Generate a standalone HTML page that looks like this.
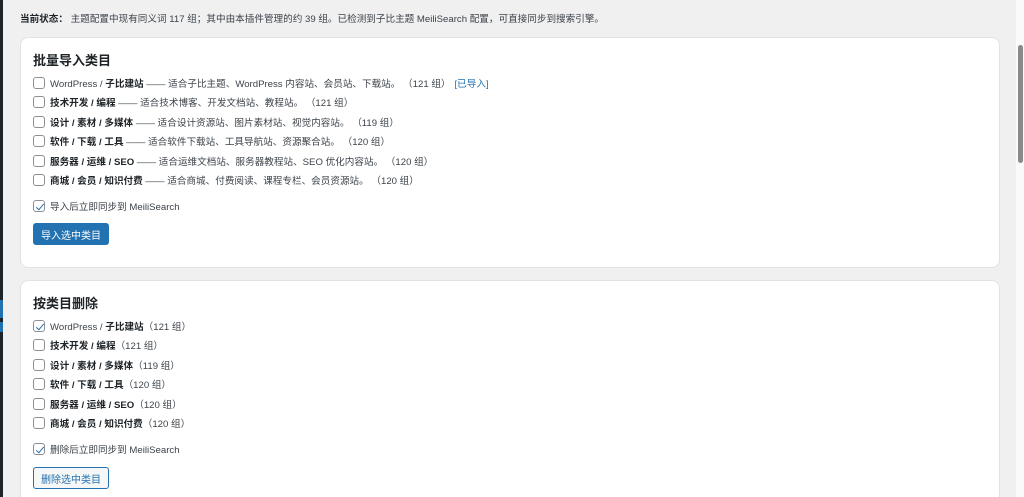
<!DOCTYPE html>
<html><head><meta charset="utf-8"><style>
*{box-sizing:border-box;margin:0;padding:0}
html,body{width:1024px;height:497px;overflow:hidden}
body{background:#f0f0f1;font-family:"Liberation Sans","Noto Sans CJK SC",sans-serif;color:#3c434a;font-size:9.6px;position:relative}
.lb{position:absolute;left:0;top:0;width:3px;height:497px;background:#1d2327}
.lb i{position:absolute;left:0;width:3px;height:18px;background:#2271b1}
.sb{position:absolute;right:0;top:0;width:8px;height:497px;background:#fafafa}
.sb i{position:absolute;left:2px;top:45px;width:5px;height:118px;border-radius:3px;background:#8a8a8a}
.status{position:absolute;left:20px;top:11px;font-size:9.6px;color:#3c434a}
.status b{color:#1d2327}
.card{position:absolute;left:20px;width:980px;background:#fff;border:1px solid #e2e2e4;border-radius:8px}
h2{position:absolute;left:12px;font-size:13px;font-weight:bold;color:#1d2327}
.row{position:absolute;left:12px;height:14px;display:flex;align-items:center;white-space:nowrap}
.cb{width:12px;height:12px;border:1px solid #8c8f94;border-radius:3px;margin-right:5px;position:relative;background:#fff;flex:none}
.cb.on::after{content:"";position:absolute;left:3.5px;top:0.5px;width:3px;height:7px;border:solid #2271b1;border-width:0 1.6px 1.6px 0;transform:rotate(40deg)}
.row b{color:#1d2327}
.a{color:#2271b1;margin-left:4px}
.btn{position:absolute;left:12px;height:22px;padding:0 7px;border-radius:3px;font-size:10px;display:flex;align-items:center}
.p{background:#2271b1;color:#fff;border:1px solid #2271b1}
.s{background:#f6f7f7;color:#2271b1;border:1px solid #2271b1}
</style></head><body>
<div class="lb"><i style="top:300px"></i><i style="top:322px;height:10px"></i></div>
<div class="sb"><i></i></div>
<div class="status"><b>当前状态：</b> 主题配置中现有同义词 117 组；其中由本插件管理的约 39 组。已检测到子比主题 MeiliSearch 配置，可直接同步到搜索引擎。</div>

<div class="card" style="top:37px;height:231px">
<h2 style="top:12px">批量导入类目</h2>
<div class="row" style="top:38px"><span class="cb"></span><span>WordPress / <b>子比建站</b> —— 适合子比主题、WordPress 内容站、会员站、下载站。 （121 组）</span><span class="a">[已导入]</span></div>
<div class="row" style="top:57px"><span class="cb"></span><span><b>技术开发 / 编程</b> —— 适合技术博客、开发文档站、教程站。 （121 组）</span></div>
<div class="row" style="top:77px"><span class="cb"></span><span><b>设计 / 素材 / 多媒体</b> —— 适合设计资源站、图片素材站、视觉内容站。 （119 组）</span></div>
<div class="row" style="top:96px"><span class="cb"></span><span><b>软件 / 下载 / 工具</b> —— 适合软件下载站、工具导航站、资源聚合站。 （120 组）</span></div>
<div class="row" style="top:116px"><span class="cb"></span><span><b>服务器 / 运维 / SEO</b> —— 适合运维文档站、服务器教程站、SEO 优化内容站。 （120 组）</span></div>
<div class="row" style="top:135px"><span class="cb"></span><span><b>商城 / 会员 / 知识付费</b> —— 适合商城、付费阅读、课程专栏、会员资源站。 （120 组）</span></div>
<div class="row" style="top:161px"><span class="cb on"></span><span>导入后立即同步到 MeiliSearch</span></div>
<div class="btn p" style="top:185px">导入选中类目</div>
</div>

<div class="card" style="top:280px;height:230px">
<h2 style="top:12px">按类目删除</h2>
<div class="row" style="top:38px"><span class="cb on"></span><span>WordPress / <b>子比建站</b>（121 组）</span></div>
<div class="row" style="top:57px"><span class="cb"></span><span><b>技术开发 / 编程</b>（121 组）</span></div>
<div class="row" style="top:77px"><span class="cb"></span><span><b>设计 / 素材 / 多媒体</b>（119 组）</span></div>
<div class="row" style="top:96px"><span class="cb"></span><span><b>软件 / 下载 / 工具</b>（120 组）</span></div>
<div class="row" style="top:116px"><span class="cb"></span><span><b>服务器 / 运维 / SEO</b>（120 组）</span></div>
<div class="row" style="top:135px"><span class="cb"></span><span><b>商城 / 会员 / 知识付费</b>（120 组）</span></div>
<div class="row" style="top:161px"><span class="cb on"></span><span>删除后立即同步到 MeiliSearch</span></div>
<div class="btn s" style="top:186px">删除选中类目</div>
</div>
</body></html>
